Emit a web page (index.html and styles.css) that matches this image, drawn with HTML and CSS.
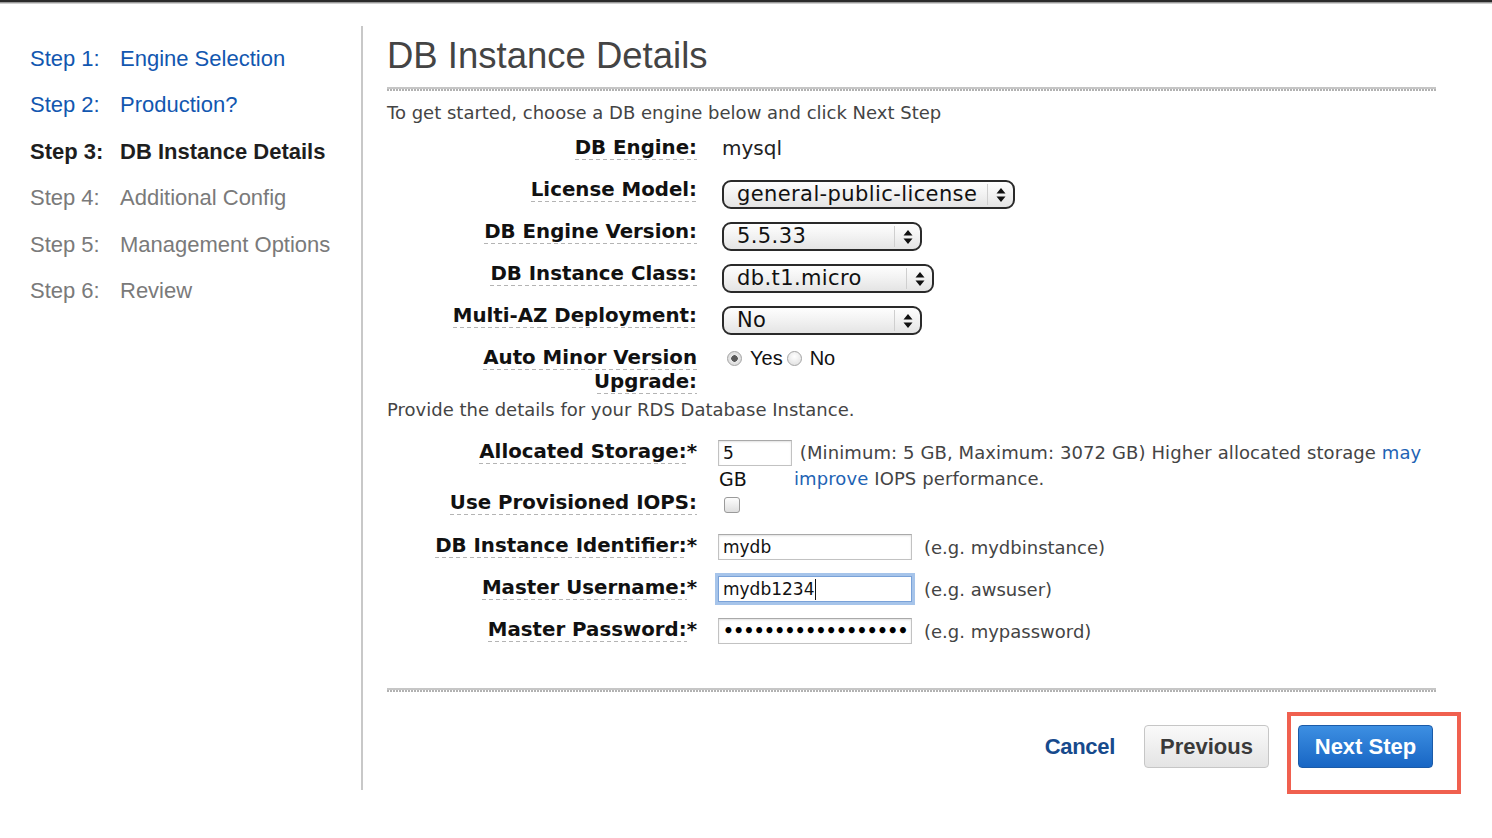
FILE: index.html
```html
<!DOCTYPE html>
<html>
<head>
<meta charset="utf-8">
<title>DB Instance Details</title>
<link rel="stylesheet" href="styles.css">
</head>
<body>
<div class="topbar"></div>
<div class="layout">
  <nav class="sidebar">
    <ul class="steps">
      <li class="step step-done"><span class="step-num">Step 1:</span><span>Engine Selection</span></li>
      <li class="step step-done"><span class="step-num">Step 2:</span><span>Production?</span></li>
      <li class="step step-current"><span class="step-num">Step 3:</span><span>DB Instance Details</span></li>
      <li class="step step-todo"><span class="step-num">Step 4:</span><span>Additional Config</span></li>
      <li class="step step-todo"><span class="step-num">Step 5:</span><span>Management Options</span></li>
      <li class="step step-todo"><span class="step-num">Step 6:</span><span>Review</span></li>
    </ul>
  </nav>
  <main class="main">
    <h1 class="title">DB Instance Details</h1>
    <div class="rule"></div>
    <p class="intro">To get started, choose a DB engine below and click Next Step</p>
    <div class="form">
      <div class="label"><span class="u">DB Engine:</span></div>
      <div class="value plain">mysql</div>

      <div class="label"><span class="u">License Model:</span></div>
      <div class="value"><div class="select sel-license"><span class="sel-text">general-public-license</span><span class="sel-arrows"><svg width="10" height="16" viewBox="0 0 10 16"><path d="M5 1 L9.5 6.5 H0.5 Z M5 15 L9.5 9.5 H0.5 Z" fill="#111"/></svg></span></div></div>

      <div class="label"><span class="u">DB Engine Version:</span></div>
      <div class="value"><div class="select sel-version"><span class="sel-text">5.5.33</span><span class="sel-arrows"><svg width="10" height="16" viewBox="0 0 10 16"><path d="M5 1 L9.5 6.5 H0.5 Z M5 15 L9.5 9.5 H0.5 Z" fill="#111"/></svg></span></div></div>

      <div class="label"><span class="u">DB Instance Class:</span></div>
      <div class="value"><div class="select sel-class"><span class="sel-text">db.t1.micro</span><span class="sel-arrows"><svg width="10" height="16" viewBox="0 0 10 16"><path d="M5 1 L9.5 6.5 H0.5 Z M5 15 L9.5 9.5 H0.5 Z" fill="#111"/></svg></span></div></div>

      <div class="label"><span class="u">Multi-AZ Deployment:</span></div>
      <div class="value"><div class="select sel-az"><span class="sel-text">No</span><span class="sel-arrows"><svg width="10" height="16" viewBox="0 0 10 16"><path d="M5 1 L9.5 6.5 H0.5 Z M5 15 L9.5 9.5 H0.5 Z" fill="#111"/></svg></span></div></div>

      <div class="label"><span class="u">Auto Minor Version Upgrade:</span></div>
      <div class="value radios">
        <label class="radio"><input type="radio" name="amv" checked><span>Yes</span></label>
        <label class="radio radio-second"><input type="radio" name="amv"><span>No</span></label>
      </div>

      <p class="section-note">Provide the details for your RDS Database Instance.</p>

      <div class="label"><span class="u">Allocated Storage:</span>*</div>
      <div class="value storage">
        <div class="storage-input"><input class="field field-small" type="text" value="5"><span class="unit">GB</span></div>
        <p class="desc">&nbsp;(Minimum: 5 GB, Maximum: 3072 GB) Higher allocated storage <a class="link" href="#">may</a> <a class="link" href="#">improve</a> IOPS performance.</p>
      </div>

      <div class="label"><span class="u">Use Provisioned IOPS:</span></div>
      <div class="value"><input class="check" type="checkbox"></div>

      <div class="label"><span class="u">DB Instance Identifier:</span>*</div>
      <div class="value inline"><input class="field" type="text" value="mydb"><span class="hint">(e.g. mydbinstance)</span></div>

      <div class="label"><span class="u">Master Username:</span>*</div>
      <div class="value inline"><div class="field field-focus">mydb1234<span class="caret"></span></div><span class="hint">(e.g. awsuser)</span></div>

      <div class="label"><span class="u">Master Password:</span>*</div>
      <div class="value inline"><input class="field field-pass" type="password" value="passwordpassword12345678"><span class="hint">(e.g. mypassword)</span></div>
    </div>
    <div class="rule rule-bottom"></div>
    <div class="actions">
      <a class="cancel" href="#">Cancel</a>
      <button class="btn btn-prev" type="button">Previous</button>
      <div class="next-wrap">
        <button class="btn btn-next" type="button">Next Step</button>
        <span class="highlight"></span>
      </div>
    </div>
  </main>
</div>
</body>
</html>
```
FILE: styles.css
```css
* { box-sizing: border-box; }
html, body { margin: 0; padding: 0; background: #fff; }
body {
  min-height: 100vh;
  font-family: "DejaVu Sans", Verdana, sans-serif;
  color: #222;
}

.topbar {
  height: 4px;
  border-top: 2px solid #2b2b2b;
  border-bottom: 1px solid #cfcfcf;
  background: #9a9a9a;
}

.layout {
  display: flex;
  margin-top: 22px;
  padding-bottom: 48px;
}

.sidebar {
  width: 363px;
  height: 764px;
  flex: none;
  border-right: 2px solid #c8c8c8;
  padding-top: 10px;
}
.steps {
  list-style: none;
  margin: 0;
  padding: 0 0 0 30px;
  font-family: "Liberation Sans", Arial, sans-serif;
  font-size: 22px;
}
.step {
  display: flex;
  line-height: 46.4px;
  height: 46.4px;
}
.step-num { width: 90px; flex: none; }
.step-done { color: #1257b0; }
.step-current { color: #1e1e1e; font-weight: bold; }
.step-todo { color: #7a7a7a; }

.main {
  width: 1073px;
  padding-left: 24px;
  padding-top: 8px;
}
.title {
  margin: 0;
  font-family: "Liberation Sans", Arial, sans-serif;
  font-weight: normal;
  font-size: 36.5px;
  line-height: 44px;
  color: #444;
}
.rule {
  height: 4px;
  margin-top: 9px;
  background:
    linear-gradient(#c6c6c6, #c6c6c6) top left / 100% 2px no-repeat,
    repeating-linear-gradient(90deg, #b2b2b2 0 2px, transparent 2px 3px) bottom left / 100% 2px no-repeat;
}
.intro {
  margin: 10px 0 0;
  font-size: 18px;
  line-height: 24px;
  color: #444;
}

.form {
  margin-top: 11px;
  display: grid;
  grid-template-columns: 310px 1fr;
  grid-template-rows: 42px 42px 42px 42px 42px 52px 42px 51px 43px 42px 42px 42px;
  column-gap: 25px;
}
.label {
  text-align: right;
  font-weight: bold;
  font-size: 19.8px;
  line-height: 24px;
  color: #111;
}
.u {
  padding-bottom: 1px;
  background: repeating-linear-gradient(90deg, #b4b4b4 0 4px, transparent 4px 7px) left bottom / 100% 1px no-repeat;
}
.value { min-width: 0; }
.plain {
  font-size: 20px;
  line-height: 24px;
  color: #222;
}

.select {
  margin-top: 2px;
  height: 29px;
  display: flex;
  align-items: center;
  border: 2px solid #2a2a2a;
  border-radius: 9px;
  background: linear-gradient(#fefefe, #f3f3f3 45%, #e4e4e4);
  color: #111;
}
.sel-license { width: 293px; }
.sel-version { width: 200px; }
.sel-class { width: 212px; }
.sel-az { width: 200px; }
.sel-text {
  padding-left: 13px;
  font-size: 21px;
  line-height: 25px;
  letter-spacing: 0.4px;
  white-space: nowrap;
}
.sel-arrows {
  margin-left: auto;
  width: 26px;
  height: 21px;
  border-left: 1px solid #cfcfcf;
  display: flex;
  align-items: center;
  justify-content: center;
}

.radios {
  display: flex;
  align-items: center;
  height: 24px;
  font-family: "Liberation Sans", Arial, sans-serif;
  font-size: 20px;
  color: #111;
}
.radio { display: flex; align-items: center; }
.radio input {
  -webkit-appearance: none;
  appearance: none;
  margin: 1px 8px 0 5px;
  width: 15px;
  height: 15px;
  border-radius: 50%;
  border: 1px solid #a4a4a4;
  background: radial-gradient(circle at 50% 35%, #ffffff, #dcdcdc);
}
.radio-second input { margin-left: 4px; }
.radio input:checked {
  background: radial-gradient(circle, #5a5a5a 0 3px, #e8e8e8 3.5px, #d4d4d4 100%);
}

.section-note {
  grid-column: 1 / -1;
  margin: 0;
  font-size: 18px;
  line-height: 24px;
  color: #444;
}

.storage { display: flex; margin-left: -4px; }
.storage-input { width: 76px; flex: none; }
.unit {
  display: block;
  padding-left: 1px;
  font-size: 19px;
  line-height: 26px;
  color: #111;
}
.desc {
  margin: 0;
  font-size: 18px;
  line-height: 26px;
  letter-spacing: 0.1px;
  color: #444;
}
.link { color: #1e63b4; text-decoration: none; }

.field {
  display: block;
  width: 194px;
  height: 26px;
  margin: 0;
  padding: 0 4px;
  border: 1px solid #c2c2c2;
  border-top-color: #a9a9a9;
  box-shadow: inset 0 1px 2px rgba(0,0,0,0.12);
  font-family: "DejaVu Sans", Verdana, sans-serif;
  font-size: 17px;
  line-height: 24px;
  color: #111;
  background: #fff;
  outline: none;
}
.field-small { width: 74px; }
.field-pass { font-weight: bold; color: #000; letter-spacing: -0.6px; }
.field-focus {
  border-color: #7aa2d8;
  box-shadow: 0 0 0 3px #a6c4ea;
  display: flex;
  align-items: center;
}
.caret {
  display: inline-block;
  width: 1px;
  height: 21px;
  background: #111;
  margin-left: 1px;
}
.check {
  -webkit-appearance: none;
  appearance: none;
  display: block;
  margin: 6px 0 0 2px;
  width: 16px;
  height: 16px;
  border: 1px solid #9a9a9a;
  border-radius: 3px;
  background: linear-gradient(#fdfdfd, #dedede);
}
.inline {
  display: flex;
  align-items: center;
  height: 26px;
  margin-left: -4px;
}
.hint {
  margin-left: 12px;
  font-size: 18px;
  color: #444;
  white-space: nowrap;
}

.rule-bottom { margin-top: 28px; }

.actions {
  display: flex;
  justify-content: flex-end;
  align-items: center;
  gap: 29px;
  margin-top: 33px;
  padding-right: 3px;
  font-family: "Liberation Sans", Arial, sans-serif;
}
.cancel {
  font-size: 22px;
  font-weight: bold;
  color: #174a8c;
  text-decoration: none;
  letter-spacing: -0.3px;
}
.btn {
  height: 43px;
  border-radius: 4px;
  font-family: "Liberation Sans", Arial, sans-serif;
  font-size: 22px;
  font-weight: bold;
  padding: 0;
  cursor: pointer;
}
.btn-prev {
  width: 125px;
  color: #3a3a3a;
  border: 1px solid #c6c6c6;
  background: linear-gradient(#fafafa, #e4e4e4);
}
.btn-next {
  width: 135px;
  color: #fff;
  border: 1px solid #1b5ba8;
  background: linear-gradient(#3d8fe2, #1866c4);
}
.next-wrap { position: relative; display: flex; }
.highlight {
  position: absolute;
  left: -11px;
  top: -13px;
  width: 174px;
  height: 82px;
  border: 4px solid #f0604f;
  pointer-events: none;
}
```
